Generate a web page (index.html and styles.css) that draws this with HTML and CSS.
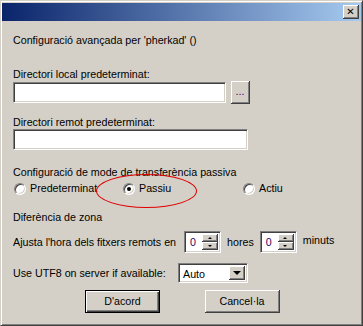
FILE: index.html
```html
<!DOCTYPE html>
<html lang="ca">
<head>
    <meta charset="UTF-8">
    <link rel="stylesheet" href="styles.css">
</head>
<body>

<div class="window">
    <!-- Title bar -->
    <div class="titlebar">
        <div class="close-btn">&#x2715;</div>
    </div>

    <div class="content">
        <p class="heading">Configuració avançada per 'pherkad' ()</p>

        <p class="label first">Directori local predeterminat:</p>
        <div class="row-local">
            <div class="field field-local"></div>
            <div class="btn browse-btn">...</div>
        </div>

        <p class="label second">Directori remot predeterminat:</p>
        <div class="field field-remote"></div>

        <p class="label third">Configuració de mode de transferència passiva</p>
        <div class="radios">
            <label class="radio-item"><span class="radio"></span>Predeterminat</label>
            <label class="radio-item"><span class="radio checked"></span>Passiu</label>
            <label class="radio-item"><span class="radio"></span>Actiu</label>
        </div>

        <p class="label fourth">Diferència de zona</p>
        <div class="zone-row">
            <span class="zone-text">Ajusta l'hora dels fitxers remots en</span>
            <div class="spin">
                <div class="spin-value">0</div>
                <div class="spin-buttons">
                    <div class="spin-btn"><span class="tri-up"></span></div>
                    <div class="spin-btn"><span class="tri-down"></span></div>
                </div>
            </div>
            <span class="unit">hores</span>
            <div class="spin">
                <div class="spin-value">0</div>
                <div class="spin-buttons">
                    <div class="spin-btn"><span class="tri-up"></span></div>
                    <div class="spin-btn"><span class="tri-down"></span></div>
                </div>
            </div>
            <span class="unit unit-min">minuts</span>
        </div>

        <div class="utf-row">
            <span class="utf-text">Use UTF8 on server if available:</span>
            <div class="select">
                <div class="select-value">Auto</div>
                <div class="select-btn"><span class="tri-down big"></span></div>
            </div>
        </div>

        <div class="actions">
            <div class="btn default-btn"><span>D'acord</span></div>
            <div class="btn cancel-btn">Cancel·la</div>
        </div>

        <!-- hand drawn annotation -->
        <div class="ellipse"></div>
    </div>
</div>

</body>
</html>
```

FILE: styles.css
```css
body {
    margin: 0;
    padding: 0;
    background-color: #d4d0c8;
    font-family: "Liberation Sans", Arial, sans-serif;
    font-size: 10.7px;
    color: #000;
}

p {
    margin: 0;
}

/* Window frame */
.window {
    width: 363px;
    height: 326px;
    box-sizing: border-box;
    border-top: 1px solid #d4d0c8;
    border-left: 1px solid #d4d0c8;
    border-right: 1px solid #404040;
    border-bottom: 1px solid #404040;
    box-shadow: inset 1px 1px #ffffff, inset -1px -1px #808080;
    padding: 2px 1px 1px 1px;
    background-color: #d4d0c8;
}

/* Title bar */
.titlebar {
    height: 18px;
    background: linear-gradient(to right, #0a246a, #a6caf0);
    display: flex;
    justify-content: flex-end;
    align-items: center;
    padding-right: 2px;
}
.close-btn {
    width: 16px;
    height: 14px;
    box-sizing: border-box;
    background-color: #d4d0c8;
    border-right: 1px solid #404040;
    border-bottom: 1px solid #404040;
    box-shadow: inset 1px 1px #ffffff, inset -1px -1px #808080;
    font-size: 10px;
    font-weight: bold;
    line-height: 13px;
    text-align: center;
    font-family: "DejaVu Sans", sans-serif;
}

/* Content */
.content {
    position: relative;
    padding: 13px 11px 0 11px;
    line-height: 13px;
}
.label.first {
    margin-top: 21px;
}
.label.second {
    margin-top: 12px;
}
.label.third {
    margin-top: 16px;
}
.label.fourth {
    margin-top: 16px;
}

/* Sunken text fields */
.field,
.spin,
.select {
    box-sizing: border-box;
    background-color: #fff;
    border-top: 1px solid #808080;
    border-left: 1px solid #808080;
    border-right: 1px solid #fff;
    border-bottom: 1px solid #fff;
    box-shadow: inset 1px 1px #404040, inset -1px -1px #d4d0c8;
}
.row-local {
    display: flex;
    align-items: center;
    gap: 5px;
}
.field-local {
    width: 213px;
    height: 21px;
}
.field-remote {
    width: 235px;
    height: 21px;
}

/* Raised buttons */
.btn {
    box-sizing: border-box;
    background-color: #d4d0c8;
    border-right: 1px solid #404040;
    border-bottom: 1px solid #404040;
    box-shadow: inset 1px 1px #ffffff, inset -1px -1px #808080;
    display: flex;
    align-items: center;
    justify-content: center;
}
.browse-btn {
    width: 19px;
    height: 23px;
    color: #4b0070;
    padding-bottom: 2px;
}

/* Radios */
.radios {
    margin-top: 3px;
    display: grid;
    grid-template-columns: 109px 120px auto;
    height: 13px;
}
.radio-item {
    display: flex;
    align-items: center;
    gap: 4px;
    padding-left: 1px;
}
.radio {
    width: 12px;
    height: 12px;
    box-sizing: border-box;
    border-radius: 50%;
    background-color: #fff;
    border-top: 1px solid #808080;
    border-left: 1px solid #808080;
    border-right: 1px solid #fff;
    border-bottom: 1px solid #fff;
    box-shadow: inset 1px 1px #404040, inset -1px -1px #d4d0c8;
    display: flex;
    align-items: center;
    justify-content: center;
}
.radio.checked::after {
    content: "";
    width: 4px;
    height: 4px;
    border-radius: 50%;
    background-color: #000;
}

/* Time zone row */
.zone-row {
    margin-top: 7px;
    display: flex;
    align-items: center;
}
.zone-text {
    width: 171px;
}
.spin {
    width: 37px;
    height: 22px;
    display: flex;
    padding: 2px;
}
.spin-value {
    flex: 1;
    padding-left: 3px;
    line-height: 17px;
    color: #300060;
}
.spin-buttons {
    display: flex;
    flex-direction: column;
    width: 16px;
}
.spin-btn {
    flex: 1;
    box-sizing: border-box;
    background-color: #d4d0c8;
    border-right: 1px solid #404040;
    border-bottom: 1px solid #404040;
    box-shadow: inset 1px 1px #ffffff, inset -1px -1px #808080;
    display: flex;
    align-items: center;
    justify-content: center;
}
.tri-up {
    width: 0;
    height: 0;
    border-left: 2px solid transparent;
    border-right: 2px solid transparent;
    border-bottom: 2px solid #000;
}
.tri-down {
    width: 0;
    height: 0;
    border-left: 2px solid transparent;
    border-right: 2px solid transparent;
    border-top: 2px solid #000;
}
.tri-down.big {
    border-left-width: 4px;
    border-right-width: 4px;
    border-top-width: 4px;
}
.unit {
    margin: 0 6px 0 6px;
}
.unit-min {
    margin-top: -3px;
}

/* UTF8 row */
.utf-row {
    margin-top: 10px;
    display: flex;
    align-items: center;
}
.utf-text {
    width: 165px;
}
.select {
    width: 70px;
    height: 20px;
    display: flex;
    padding: 2px;
}
.select-value {
    flex: 1;
    padding-left: 2px;
    line-height: 16px;
}
.select-btn {
    width: 16px;
    box-sizing: border-box;
    background-color: #d4d0c8;
    border-right: 1px solid #404040;
    border-bottom: 1px solid #404040;
    box-shadow: inset 1px 1px #ffffff, inset -1px -1px #808080;
    display: flex;
    align-items: center;
    justify-content: center;
}

/* Dialog buttons */
.actions {
    margin-top: 7px;
    display: flex;
    gap: 45px;
    padding-left: 72px;
}
.default-btn,
.cancel-btn {
    width: 75px;
    height: 23px;
}
.default-btn {
    border: 1px solid #000;
    box-shadow: inset 1px 1px #ffffff, inset -1px -1px #404040, inset -2px -2px #808080;
}

/* Red ellipse annotation */
.ellipse {
    position: absolute;
    left: 94px;
    top: 153px;
    width: 99px;
    height: 32px;
    border: 1px solid #e00000;
    border-radius: 50%;
}
```
